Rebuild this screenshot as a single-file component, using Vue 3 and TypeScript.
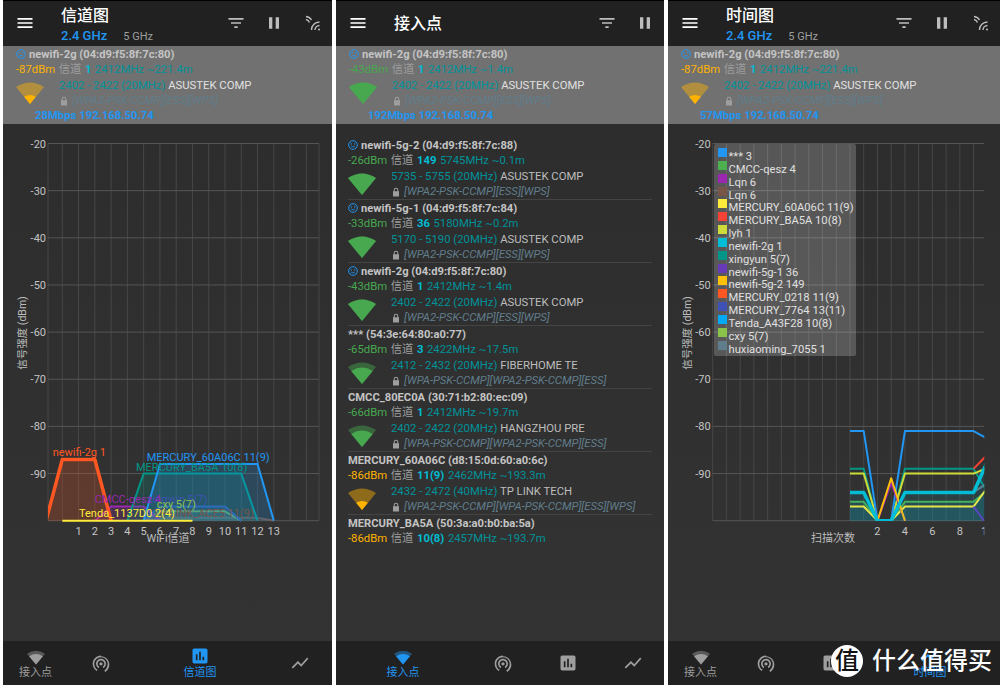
<script setup lang="ts">
type Point = [number, number]

interface Series {
  color: string
  width: number
  points: Point[]
  fill?: boolean
}

interface ChartLabel {
  text: string
  x: number
  y: number
  color: string
}

interface Network {
  name: string
  smile?: 'sad' | 'happy'
  dbm: number
  level: number
  channel: string
  freq: string
  range?: string
  vendor?: string
  security?: string
  speed?: string
}

interface Tab {
  label: string
  icon: 'wifi' | 'tether' | 'bars' | 'line'
  showLabel: boolean
}

const AMBER = '#ffb300'
const GREEN = '#47a84f'
const BLUE = '#2196f3'

const MENU = 'M3 18h18v-2H3v2zm0-5h18v-2H3v2zm0-7v2h18V6H3z'
const FILTER = 'M10 18h4v-2h-4v2zM3 6v2h18V6H3zm3 7h12v-2H6v2z'
const PAUSE = 'M6 19h4V5H6v14zm8-14v14h4V5h-4z'
const FAN = 'M0 5 Q14 -4 28 5 L14 22 Z'
const NAV_ICONS: Record<string, string> = {
  tether:
    'M12 11c-1.1 0-2 .9-2 2s.9 2 2 2 2-.9 2-2-.9-2-2-2zm6 2c0-3.31-2.69-6-6-6s-6 2.69-6 6c0 2.22 1.21 4.15 3 5.19l1-1.74c-1.19-.7-2-1.97-2-3.45 0-2.21 1.79-4 4-4s4 1.79 4 4c0 1.48-.81 2.75-2 3.45l1 1.74c1.79-1.04 3-2.97 3-5.19zM12 3C6.48 3 2 7.48 2 13c0 3.7 2.01 6.92 4.99 8.65l1-1.73C5.61 19.53 4 16.47 4 13c0-4.42 3.58-8 8-8s8 3.58 8 8c0 3.47-1.61 6.53-4 7.92l1 1.73c2.99-1.73 5-4.95 5-8.65 0-5.52-4.48-10-10-10z',
  bars: 'M19 3H5c-1.1 0-2 .9-2 2v14c0 1.1.9 2 2 2h14c1.1 0 2-.9 2-2V5c0-1.1-.9-2-2-2zM9 17H7v-7h2v7zm4 0h-2V7h2v10zm4 0h-2v-4h2v4z',
  line: 'M3.5 18.49l6-6.01 4 4L22 6.92l-1.41-1.41-7.09 7.97-4-4L2 16.99z'
}

const band = (dbm: number, channel: string, freq: string, speed: string): Network => ({
  name: 'newifi-2g (04:d9:f5:8f:7c:80)',
  smile: 'sad',
  dbm,
  level: dbm > -50 ? 1 : 0.42,
  channel,
  freq,
  range: '2402 - 2422 (20MHz)',
  vendor: 'ASUSTEK COMP',
  security: '[WPA2-PSK-CCMP][ESS][WPS]',
  speed
})

const accessPoints: Network[] = [
  {
    name: 'newifi-5g-2 (04:d9:f5:8f:7c:88)',
    smile: 'happy',
    dbm: -26,
    level: 1,
    channel: '149',
    freq: '5745MHz ~0.1m',
    range: '5735 - 5755 (20MHz)',
    vendor: 'ASUSTEK COMP',
    security: '[WPA2-PSK-CCMP][ESS][WPS]'
  },
  {
    name: 'newifi-5g-1 (04:d9:f5:8f:7c:84)',
    smile: 'happy',
    dbm: -33,
    level: 1,
    channel: '36',
    freq: '5180MHz ~0.2m',
    range: '5170 - 5190 (20MHz)',
    vendor: 'ASUSTEK COMP',
    security: '[WPA2-PSK-CCMP][ESS][WPS]'
  },
  {
    name: 'newifi-2g (04:d9:f5:8f:7c:80)',
    smile: 'happy',
    dbm: -43,
    level: 1,
    channel: '1',
    freq: '2412MHz ~1.4m',
    range: '2402 - 2422 (20MHz)',
    vendor: 'ASUSTEK COMP',
    security: '[WPA2-PSK-CCMP][ESS][WPS]'
  },
  {
    name: '*** (54:3e:64:80:a0:77)',
    dbm: -65,
    level: 0.77,
    channel: '3',
    freq: '2422MHz ~17.5m',
    range: '2412 - 2432 (20MHz)',
    vendor: 'FIBERHOME TE',
    security: '[WPA-PSK-CCMP][WPA2-PSK-CCMP][ESS]'
  },
  {
    name: 'CMCC_80EC0A (30:71:b2:80:ec:09)',
    dbm: -66,
    level: 0.77,
    channel: '1',
    freq: '2412MHz ~19.7m',
    range: '2402 - 2422 (20MHz)',
    vendor: 'HANGZHOU PRE',
    security: '[WPA-PSK-CCMP][WPA2-PSK-CCMP][ESS]'
  },
  {
    name: 'MERCURY_60A06C (d8:15:0d:60:a0:6c)',
    dbm: -86,
    level: 0.42,
    channel: '11(9)',
    freq: '2462MHz ~193.3m',
    range: '2432 - 2472 (40MHz)',
    vendor: 'TP LINK TECH',
    security: '[WPA2-PSK-CCMP][WPA-PSK-CCMP][ESS][WPS]'
  },
  {
    name: 'MERCURY_BA5A (50:3a:a0:b0:ba:5a)',
    dbm: -86,
    level: 0.42,
    channel: '10(8)',
    freq: '2457MHz ~193.7m'
  }
]

// chart scale, in page pixels
const yOf = (dbm: number) => 143.5 + (-20 - dbm) * 4.715
const dbTicks = [-20, -30, -40, -50, -60, -70, -80, -90]

// channel chart ---------------------------------------------------------
const chX = (c: number) => 62.3 + c * 16.27
const trapezoid = (from: number, to: number, dbm: number): Point[] => [
  [chX(from - 1), yOf(-100)],
  [chX(from), yOf(dbm)],
  [chX(to), yOf(dbm)],
  [chX(to + 1), yOf(-100)]
]

const channelSeries: Series[] = [
  { color: '#795548', width: 2, points: trapezoid(6, 12, -99.4), fill: true },
  { color: '#8bc34a', width: 2, points: trapezoid(6, 10, -98), fill: true },
  { color: '#3f51b5', width: 2, points: trapezoid(6, 10, -97), fill: true },
  { color: '#9c27b0', width: 2, points: trapezoid(3, 5, -97), fill: true },
  { color: '#009688', width: 2, points: trapezoid(5, 11, -90), fill: true },
  { color: BLUE, width: 2, points: trapezoid(6, 12, -88), fill: true },
  { color: '#ff5722', width: 3.5, points: trapezoid(0, 2, -87), fill: true },
  {
    color: '#ffeb3b',
    width: 2,
    points: [
      [chX(0), yOf(-100)],
      [chX(8), yOf(-100)]
    ]
  }
]

const channelLabels: ChartLabel[] = [
  { text: 'newifi-2g 1', x: 52.7, y: 455.7, color: '#ff5722' },
  { text: 'MERCURY_60A06C 11(9)', x: 146.7, y: 460.7, color: BLUE },
  { text: 'MERCURY_BA5A 10(8)', x: 136, y: 470.7, color: '#009688' },
  { text: 'xingyun 5(7)', x: 147, y: 503, color: '#3f51b5' },
  { text: 'CMCC-qesz 4', x: 94.7, y: 503, color: '#9c27b0' },
  { text: 'TP-LINK_ACE5 11(9)', x: 153, y: 517.3, color: '#795548' },
  { text: 'cxy 5(7)', x: 156.7, y: 508.3, color: '#8bc34a' },
  { text: 'Tenda_1137D0 2(4)', x: 79, y: 517.3, color: '#ffeb3b' }
]

const channelTicks = Array.from({ length: 13 }, (_, i) => i + 1)
const channelGrid = [48, ...Array.from({ length: 16 }, (_, i) => chX(i)), 319]

// time chart ------------------------------------------------------------
const scanX = (i: number) => 712.7 + i * 13.73
const segment = (list: Point[]): Point[] => list.map(([i, d]) => [scanX(i), yOf(d)])
const scan = (dbm: number, end: number): Point[] =>
  segment([
    [10, dbm],
    [11, dbm],
    [12, -100],
    [13, -100],
    [14, dbm],
    [19, dbm],
    [20, end]
  ])

const timeSeries: Series[] = [
  { color: '#4caf50', width: 2, points: scan(-96, -93.5), fill: true },
  { color: '#ffeb3b', width: 2, points: scan(-97, -93), fill: true },
  { color: '#009688', width: 2, points: scan(-89, -94) },
  { color: '#cddc39', width: 2, points: scan(-90, -88.8) },
  {
    color: '#f44336',
    width: 2,
    points: segment([
      [19, -89],
      [20, -86]
    ])
  },
  {
    color: '#607d8b',
    width: 2,
    points: segment([
      [19, -94],
      [20, -92]
    ])
  },
  {
    color: '#673ab7',
    width: 2,
    points: segment([
      [19, -97],
      [20, -101]
    ])
  },
  { color: BLUE, width: 2, points: scan(-81, -82.6) },
  {
    color: '#9c27b0',
    width: 2,
    points: segment([
      [12, -100],
      [13, -92],
      [14, -100]
    ])
  },
  {
    color: '#ffc107',
    width: 2,
    points: segment([
      [12, -100],
      [13, -91],
      [14, -100]
    ])
  },
  { color: '#00bcd4', width: 3.5, points: scan(-94, -87.5), fill: true }
]

const timeGrid = Array.from({ length: 20 }, (_, i) => scanX(i))
const timeTicks = [2, 4, 6, 8, 10]

const legend = [
  ['*** 3', '#2196f3'],
  ['CMCC-qesz 4', '#4caf50'],
  ['Lqn 6', '#9c27b0'],
  ['Lqn 6', '#795548'],
  ['MERCURY_60A06C 11(9)', '#ffeb3b'],
  ['MERCURY_BA5A 10(8)', '#f44336'],
  ['lyh 1', '#cddc39'],
  ['newifi-2g 1', '#00bcd4'],
  ['xingyun 5(7)', '#009688'],
  ['newifi-5g-1 36', '#673ab7'],
  ['newifi-5g-2 149', '#ffc107'],
  ['MERCURY_0218 11(9)', '#ff5722'],
  ['MERCURY_7764 13(11)', '#3f51b5'],
  ['Tenda_A43F28 10(8)', '#03a9f4'],
  ['cxy 5(7)', '#8bc34a'],
  ['huxiaoming_7055 1', '#607d8b']
]

const pts = (points: Point[]) => points.map((p) => p.join(',')).join(' ')
const dbmColor = (dbm: number) => (dbm < -80 ? AMBER : GREEN)
const fanTransform = (level: number) =>
  `translate(14 22) scale(${level}) translate(-14 -22)`

const tabs: Tab[] = [
  { label: '接入点', icon: 'wifi', showLabel: true },
  { label: '', icon: 'tether', showLabel: false },
  { label: '信道图', icon: 'bars', showLabel: false },
  { label: '时间图', icon: 'line', showLabel: false }
]

const panels = [
  {
    key: 'channel',
    title: '信道图',
    hasBands: true,
    active: 2,
    selected: band(-87, '1', '2412MHz ~221.4m', '28Mbps 192.168.50.74')
  },
  {
    key: 'ap',
    title: '接入点',
    hasBands: false,
    active: 0,
    selected: band(-43, '1', '2412MHz ~1.4m', '192Mbps 192.168.50.74')
  },
  {
    key: 'time',
    title: '时间图',
    hasBands: true,
    active: 3,
    selected: band(-87, '1', '2412MHz ~221.4m', '57Mbps 192.168.50.74')
  }
]

const rows = (selected: Network, key: string) =>
  key === 'ap' ? [selected, ...accessPoints] : [selected]
</script>

<template>
  <div class="page">
    <section v-for="panel in panels" :key="panel.key" class="panel">
      <header class="bar">
        <svg class="menu" viewBox="0 0 24 24" width="20" height="20"><path :d="MENU" fill="#fff" /></svg>
        <div class="heading">
          <h1>{{ panel.title }}</h1>
          <div v-if="panel.hasBands" class="bands">
            <b>2.4 GHz</b>
            <span>5 GHz</span>
          </div>
        </div>
        <div class="actions" :class="{ short: !panel.hasBands }">
          <svg viewBox="0 0 24 24" width="20" height="20"><path :d="FILTER" fill="#bdbdbd" /></svg>
          <svg viewBox="0 0 24 24" width="20" height="20"><path :d="PAUSE" fill="#bdbdbd" /></svg>
          <svg v-if="panel.hasBands" class="scan" viewBox="0 0 16 16" width="16" height="16" fill="none" stroke="#bdbdbd" stroke-width="1.4">
            <path d="M1 1.5Q5 2 6.5 5M1 4.5Q3.5 5 4.5 7.5" />
            <path d="M6.5 15A8 8 0 0 1 14.5 7M10 15A4.5 4.5 0 0 1 14.5 10.5" />
            <circle cx="14" cy="14.5" r="1" fill="#bdbdbd" stroke="none" />
          </svg>
        </div>
      </header>

      <main class="content">
        <div v-for="(net, idx) in rows(panel.selected, panel.key)" :key="idx" class="net" :class="{ selected: idx === 0 }">
          <div class="name">
            <svg v-if="net.smile" class="face" viewBox="0 0 10 10" width="10" height="10" fill="none" stroke="#2196f3">
              <circle cx="5" cy="5" r="4.3" />
              <circle cx="3.4" cy="3.9" r="0.7" fill="#2196f3" stroke="none" />
              <circle cx="6.6" cy="3.9" r="0.7" fill="#2196f3" stroke="none" />
              <path v-if="net.smile === 'sad'" d="M3 7.2Q5 5.4 7 7.2" stroke-width="0.8" />
              <path v-else d="M3 6Q5 8 7 6" stroke-width="0.8" />
            </svg>
            {{ net.name }}
          </div>
          <div class="signal">
            <span :style="{ color: dbmColor(net.dbm) }">{{ net.dbm }}dBm</span>
            <span class="muted">信道</span>
            <b>{{ net.channel }}</b>
            <span class="teal">{{ net.freq }}</span>
          </div>
          <div v-if="net.range" class="detail">
            <svg class="fan" viewBox="0 0 28 22" width="28" height="22">
              <path :d="FAN" :fill="dbmColor(net.dbm)" fill-opacity="0.45" />
              <path :d="FAN" :fill="dbmColor(net.dbm)" :transform="fanTransform(net.level)" />
            </svg>
            <div>
              <div class="range"><span class="teal">{{ net.range }}</span> <span class="vendor">{{ net.vendor }}</span></div>
              <div class="security">
                <svg viewBox="0 0 8 10" width="8" height="10"><path d="M1 4.3h.7V3a2.3 2.3 0 0 1 4.6 0v1.3H7V9.5H1zM2.7 4.3h2.6V3a1.3 1.3 0 0 0-2.6 0z" fill="#9e9e9e" /></svg>
                <i>{{ net.security }}</i>
              </div>
            </div>
          </div>
          <div v-if="net.speed" class="speed">{{ net.speed }}</div>
        </div>

        <div v-if="panel.key !== 'ap'" class="chart">
          <svg v-if="panel.key === 'channel'" class="plot" viewBox="3 124 329 517" width="329" height="517">
            <defs>
              <clipPath id="channel-clip"><rect x="48" y="140" width="272" height="382" /></clipPath>
            </defs>
            <line v-for="x in channelGrid" :key="x" :x1="x" :x2="x" y1="143.5" y2="520.7" class="grid-v" />
            <g v-for="t in dbTicks" :key="t">
              <line x1="48" x2="319" :y1="yOf(t)" :y2="yOf(t)" class="grid-h" />
              <text x="46" :y="yOf(t) + 4" text-anchor="end" class="tick">{{ t }}</text>
            </g>
            <line x1="48" x2="319" :y1="yOf(-100)" :y2="yOf(-100)" class="grid-h" />
            <g clip-path="url(#channel-clip)">
              <g v-for="(s, i) in channelSeries" :key="i">
                <polygon v-if="s.fill" :points="pts(s.points)" :fill="s.color" fill-opacity="0.22" />
                <polyline :points="pts(s.points)" fill="none" :stroke="s.color" :stroke-width="s.width" stroke-linejoin="round" />
              </g>
            </g>
            <text v-for="l in channelLabels" :key="l.text" :x="l.x" :y="l.y" :fill="l.color" class="series-label">{{ l.text }}</text>
            <text v-for="c in channelTicks" :key="c" :x="chX(c)" y="534.5" text-anchor="middle" class="tick">{{ c }}</text>
            <text x="168" y="541.5" text-anchor="middle" class="axis">WiFi信道</text>
            <text transform="translate(26 333) rotate(-90)" text-anchor="middle" class="axis-y">信号强度 (dBm)</text>
          </svg>

          <svg v-else class="plot" viewBox="668 124 332 517" width="332" height="517">
            <defs>
              <clipPath id="time-clip"><rect x="713" y="140" width="271.3" height="381" /></clipPath>
              <clipPath id="tick-clip"><rect x="713" y="522" width="271.3" height="20" /></clipPath>
            </defs>
            <line v-for="x in timeGrid" :key="x" :x1="x" :x2="x" y1="143.5" y2="520.7" class="grid-v" />
            <g v-for="t in dbTicks" :key="t">
              <line x1="712.7" x2="984.3" :y1="yOf(t)" :y2="yOf(t)" class="grid-h" />
              <text x="710.7" :y="yOf(t) + 4" text-anchor="end" class="tick">{{ t }}</text>
            </g>
            <line x1="712.7" x2="984.3" :y1="yOf(-100)" :y2="yOf(-100)" class="grid-h" />
            <g clip-path="url(#time-clip)">
              <g v-for="(s, i) in timeSeries" :key="i">
                <polygon
                  v-if="s.fill"
                  :points="`${pts(s.points)} ${scanX(20)},${yOf(-100)} ${scanX(10)},${yOf(-100)}`"
                  fill="#00bcd4"
                  fill-opacity="0.1"
                />
                <polyline :points="pts(s.points)" fill="none" :stroke="s.color" :stroke-width="s.width" stroke-linejoin="round" />
              </g>
            </g>
            <g clip-path="url(#tick-clip)">
              <text v-for="t in timeTicks" :key="t" :x="scanX(10 + t)" y="534.5" text-anchor="middle" class="tick">{{ t }}</text>
            </g>
            <text x="833" y="541.5" text-anchor="middle" class="axis">扫描次数</text>
            <text transform="translate(691 333) rotate(-90)" text-anchor="middle" class="axis-y">信号强度 (dBm)</text>
          </svg>

          <ul v-if="panel.key === 'time'" class="legend">
            <li v-for="[label, color] in legend" :key="label + color">
              <i :style="{ background: color }"></i>
              <span>{{ label }}</span>
            </li>
          </ul>
        </div>
      </main>

      <nav class="tabs">
        <div v-for="(tab, i) in tabs" :key="tab.icon" class="tab" :class="{ active: panel.active === i }">
          <svg v-if="tab.icon === 'wifi'" class="tab-fan" viewBox="0 0 28 22" width="18" height="15">
            <path :d="FAN" fill="currentColor" fill-opacity="0.45" />
            <path :d="FAN" fill="currentColor" :transform="fanTransform(0.77)" />
          </svg>
          <svg v-else viewBox="0 0 24 24" width="20" height="20"><path :d="NAV_ICONS[tab.icon]" fill="currentColor" /></svg>
          <span v-if="tab.showLabel || panel.active === i">{{ tab.label }}</span>
        </div>
      </nav>
    </section>

    <div class="watermark">
      <span class="seal">值</span>
      <span>什么值得买</span>
    </div>
  </div>
</template>

<style>
body {
  margin: 0;
  background: #fff;
}
</style>

<style scoped>
.page {
  position: relative;
  display: grid;
  grid-template-columns: 329px 328px 332px;
  column-gap: 4px;
  width: 1000px;
  height: 688px;
  box-sizing: border-box;
  padding: 0 0 3px 3px;
  overflow: hidden;
  background: #fff;
  font-family: Roboto, 'Noto Sans CJK SC', sans-serif;
  font-size: 11.3px;
}

.panel {
  display: flex;
  flex-direction: column;
  min-width: 0;
  background: #212121;
  border-top: 1px solid #000;
}

.bar {
  display: flex;
  align-items: center;
  flex: none;
  height: 45px;
  padding-left: 12px;
}

.menu {
  flex: none;
  margin-top: -1px;
}

.heading {
  flex: 1;
  margin-left: 26px;
  color: #fff;
}

.heading h1 {
  margin: 0;
  font-size: 16px;
  font-weight: 500;
  line-height: 24px;
}

.bands {
  display: flex;
  align-items: baseline;
  gap: 16px;
  line-height: 15px;
}

.bands b {
  color: #2196f3;
  font-size: 13px;
  font-weight: 500;
}

.bands span {
  color: #9e9e9e;
  font-size: 11px;
}

.actions {
  display: flex;
  align-items: center;
  gap: 18.5px;
  padding-right: 11px;
  margin-top: -1px;
}

.actions.short {
  padding-right: 9px;
}

.scan {
  margin-left: 2.5px;
}

.content {
  flex: 1;
  min-height: 0;
  overflow: hidden;
  background: linear-gradient(#2c2c2c, #333);
}

.net {
  margin: 0 12px;
  padding-top: 0.5px;
  border-bottom: 1px solid #444;
  color: #c4c4c4;
  line-height: 15.5px;
  white-space: nowrap;
}

.net:last-of-type {
  border-bottom: 0;
}

.net.selected {
  height: 78px;
  box-sizing: border-box;
  margin: 0;
  padding-left: 13px;
  border-bottom: 0;
  background: #717171;
}

.net.selected + .net {
  margin-top: 13px;
}

.name {
  display: flex;
  align-items: center;
  gap: 3px;
  height: 15.5px;
  font-size: 11.2px;
  font-weight: 700;
}

.face {
  flex: none;
}

.signal {
  display: flex;
  gap: 3.6px;
  height: 15.5px;
}

.signal b {
  color: #00bcd4;
  font-weight: 700;
}

.muted {
  color: #9e9e9e;
}

.teal {
  color: #00929a;
}

.detail {
  display: flex;
  gap: 15px;
  height: 30.5px;
}

.fan {
  flex: none;
  margin-top: 4px;
}

.vendor {
  color: #bdbdbd;
}

.selected .vendor {
  color: #e0e0e0;
}

.security {
  display: flex;
  align-items: center;
  gap: 4px;
  padding-left: 1px;
  height: 15.5px;
}

.security i {
  color: #607d8b;
}

.speed {
  padding-left: 19px;
  color: #2196f3;
  font-weight: 700;
}

.chart {
  position: relative;
}

.plot {
  display: block;
}

.grid-v {
  stroke: #474747;
  stroke-width: 1;
}

.grid-h {
  stroke: #555;
  stroke-width: 1;
}

.tick {
  fill: #c4c4c4;
  font-size: 11px;
}

.series-label {
  font-size: 11px;
}

.axis {
  fill: #bdbdbd;
  font-size: 11px;
}

.axis-y {
  fill: #bdbdbd;
  font-size: 10.5px;
}

.legend {
  position: absolute;
  left: 46px;
  top: 20px;
  width: 142px;
  height: 212px;
  box-sizing: border-box;
  margin: 0;
  padding: 4px 0 0 4px;
  list-style: none;
  border-radius: 2px;
  background: rgba(255, 255, 255, 0.2);
}

.legend li {
  display: flex;
  height: 12.85px;
  gap: 1.5px;
}

.legend i {
  flex: none;
  width: 9px;
  height: 9px;
}

.legend span {
  color: #e0e0e0;
  font-size: 11.2px;
  line-height: 12px;
  margin-top: 3px;
  white-space: nowrap;
}

.tabs {
  display: flex;
  flex: none;
  height: 44px;
  background: #212121;
}

.tab {
  display: flex;
  flex: 0 0 65px;
  flex-direction: column;
  align-items: center;
  justify-content: center;
  color: #9e9e9e;
  font-size: 11px;
  line-height: 14px;
}

.tab.active {
  flex-basis: 134px;
  color: #2196f3;
}

.tab-fan {
  margin: 3px 0 1px;
}

.watermark {
  position: absolute;
  left: 831px;
  top: 645px;
  display: flex;
  align-items: center;
  gap: 9px;
  color: #fff;
  font-size: 24px;
  font-weight: 500;
  line-height: 32px;
}

.seal {
  width: 32px;
  height: 32px;
  border-radius: 50%;
  background: #fff;
  color: #111;
  text-align: center;
}
</style>
